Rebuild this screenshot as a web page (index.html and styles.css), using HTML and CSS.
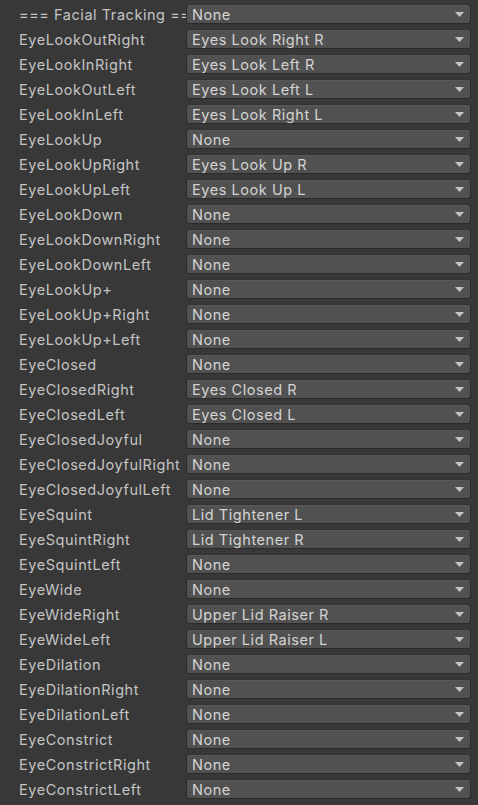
FILE: index.html
```html
<!DOCTYPE html>
<html>
<head>
<meta charset="utf-8">
<link rel="stylesheet" href="styles.css">
</head>
<body>
<div class="list">
  <div class="row"><span class="label">=== Facial Tracking ===</span><div class="dd"><span>None</span><i class="arrow"></i></div></div>
  <div class="row"><span class="label">EyeLookOutRight</span><div class="dd"><span>Eyes Look Right R</span><i class="arrow"></i></div></div>
  <div class="row"><span class="label">EyeLookInRight</span><div class="dd"><span>Eyes Look Left R</span><i class="arrow"></i></div></div>
  <div class="row"><span class="label">EyeLookOutLeft</span><div class="dd"><span>Eyes Look Left L</span><i class="arrow"></i></div></div>
  <div class="row"><span class="label">EyeLookInLeft</span><div class="dd"><span>Eyes Look Right L</span><i class="arrow"></i></div></div>
  <div class="row"><span class="label">EyeLookUp</span><div class="dd"><span>None</span><i class="arrow"></i></div></div>
  <div class="row"><span class="label">EyeLookUpRight</span><div class="dd"><span>Eyes Look Up R</span><i class="arrow"></i></div></div>
  <div class="row"><span class="label">EyeLookUpLeft</span><div class="dd"><span>Eyes Look Up L</span><i class="arrow"></i></div></div>
  <div class="row"><span class="label">EyeLookDown</span><div class="dd"><span>None</span><i class="arrow"></i></div></div>
  <div class="row"><span class="label">EyeLookDownRight</span><div class="dd"><span>None</span><i class="arrow"></i></div></div>
  <div class="row"><span class="label">EyeLookDownLeft</span><div class="dd"><span>None</span><i class="arrow"></i></div></div>
  <div class="row"><span class="label">EyeLookUp+</span><div class="dd"><span>None</span><i class="arrow"></i></div></div>
  <div class="row"><span class="label">EyeLookUp+Right</span><div class="dd"><span>None</span><i class="arrow"></i></div></div>
  <div class="row"><span class="label">EyeLookUp+Left</span><div class="dd"><span>None</span><i class="arrow"></i></div></div>
  <div class="row"><span class="label">EyeClosed</span><div class="dd"><span>None</span><i class="arrow"></i></div></div>
  <div class="row"><span class="label">EyeClosedRight</span><div class="dd"><span>Eyes Closed R</span><i class="arrow"></i></div></div>
  <div class="row"><span class="label">EyeClosedLeft</span><div class="dd"><span>Eyes Closed L</span><i class="arrow"></i></div></div>
  <div class="row"><span class="label">EyeClosedJoyful</span><div class="dd"><span>None</span><i class="arrow"></i></div></div>
  <div class="row"><span class="label">EyeClosedJoyfulRight</span><div class="dd"><span>None</span><i class="arrow"></i></div></div>
  <div class="row"><span class="label">EyeClosedJoyfulLeft</span><div class="dd"><span>None</span><i class="arrow"></i></div></div>
  <div class="row"><span class="label">EyeSquint</span><div class="dd"><span>Lid Tightener L</span><i class="arrow"></i></div></div>
  <div class="row"><span class="label">EyeSquintRight</span><div class="dd"><span>Lid Tightener R</span><i class="arrow"></i></div></div>
  <div class="row"><span class="label">EyeSquintLeft</span><div class="dd"><span>None</span><i class="arrow"></i></div></div>
  <div class="row"><span class="label">EyeWide</span><div class="dd"><span>None</span><i class="arrow"></i></div></div>
  <div class="row"><span class="label">EyeWideRight</span><div class="dd"><span>Upper Lid Raiser R</span><i class="arrow"></i></div></div>
  <div class="row"><span class="label">EyeWideLeft</span><div class="dd"><span>Upper Lid Raiser L</span><i class="arrow"></i></div></div>
  <div class="row"><span class="label">EyeDilation</span><div class="dd"><span>None</span><i class="arrow"></i></div></div>
  <div class="row"><span class="label">EyeDilationRight</span><div class="dd"><span>None</span><i class="arrow"></i></div></div>
  <div class="row"><span class="label">EyeDilationLeft</span><div class="dd"><span>None</span><i class="arrow"></i></div></div>
  <div class="row"><span class="label">EyeConstrict</span><div class="dd"><span>None</span><i class="arrow"></i></div></div>
  <div class="row"><span class="label">EyeConstrictRight</span><div class="dd"><span>None</span><i class="arrow"></i></div></div>
  <div class="row"><span class="label">EyeConstrictLeft</span><div class="dd"><span>None</span><i class="arrow"></i></div></div>
</div>
</body>
</html>
```
FILE: styles.css
```css
html, body {
  margin: 0;
  padding: 0;
  background: #383838;
  height: 100%;
  overflow: hidden;
}
.list {
  display: flex;
  flex-direction: column;
  gap: 5px;
  padding: 4px 7px 0 18px;
  font-family: Inter, "Noto Sans", sans-serif;
  font-size: 14.5px;
  letter-spacing: 0.55px;
}
.row {
  display: grid;
  grid-template-columns: 168px 1fr;
  height: 20px;
  align-items: center;
}
.label {
  color: #c4c4c4;
  white-space: nowrap;
  overflow: hidden;
  padding-left: 1px;
  padding-right: 2px;
  line-height: 20px;
  padding-top: 1px;
}
.dd {
  height: 20px;
  box-sizing: border-box;
  background: #515151;
  border: 1px solid #2b2b2b;
  border-top-color: #333;
  border-radius: 3px;
  display: flex;
  align-items: center;
  padding: 0 6px 0 5px;
  color: #d4d4d4;
  box-shadow: inset 0 1px 0 #585858;
}
.dd span {
  flex: 1;
  white-space: nowrap;
  overflow: hidden;
  line-height: 18px;
  padding-top: 1px;
}
.arrow {
  width: 9px;
  height: 5px;
  background: #c4c4c4;
  clip-path: polygon(0 0, 100% 0, 50% 100%);
  margin-top: 1px;
}
```
